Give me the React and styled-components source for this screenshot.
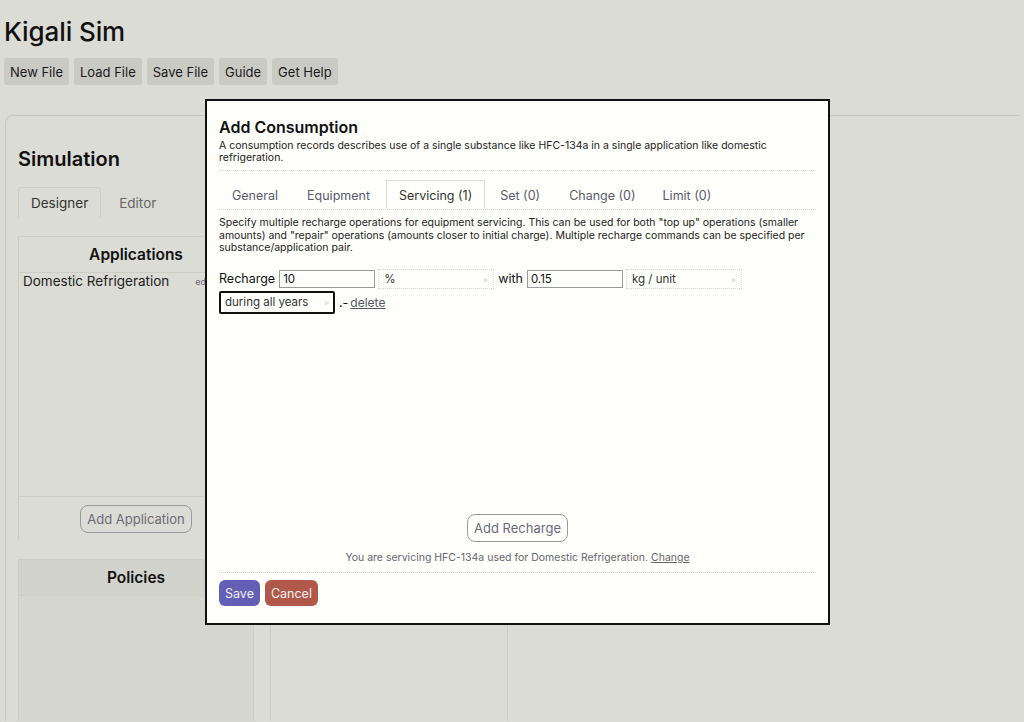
import React from 'react';
import styled, { createGlobalStyle } from 'styled-components';

const Global = createGlobalStyle`
  html, body {
    margin: 0;
    padding: 0;
    background: #dcdcd6;
    font-family: Inter, "Noto Sans", "Liberation Sans", sans-serif;
    color: #111;
    overflow: hidden;
  }
`;

const Page = styled.div`
  height: 722px;
  padding: 0 4px;
  box-sizing: border-box;
  overflow: hidden;
`;

const Title = styled.h1`
  margin: 0;
  padding-top: 15px;
  font-size: 26px;
  font-weight: 500;
  line-height: 34px;
  letter-spacing: -0.1px;
`;

const Toolbar = styled.div`
  display: flex;
  gap: 5px;
  margin-top: 9px;
`;

const ToolButton = styled.button`
  font: inherit;
  font-size: 13px;
  color: #1a1a1a;
  background: #cacac5;
  border: none;
  border-radius: 3px;
  height: 27px;
  padding: 0 6px;
`;

const Main = styled.section`
  margin-top: 30px;
  margin-left: 1px;
  border-top: 1px solid #c7c7bf;
  border-left: 1px solid #c7c7bf;
  border-top-left-radius: 8px;
  padding: 0 12px;
  height: 605px;
  overflow: hidden;
`;

const SectionTitle = styled.h2`
  margin: 0;
  padding-top: 31px;
  font-size: 20px;
  font-weight: 600;
  line-height: 24px;
`;

const Tabs = styled.div`
  display: flex;
  margin-top: 16px;
`;

const Tab = styled.div`
  height: 30px;
  padding: 0 12px;
  display: flex;
  align-items: center;
  font-size: 13.5px;
  color: ${p => (p.$active ? '#333' : '#666')};
  border: 1px solid ${p => (p.$active ? '#cfcfc8' : 'transparent')};
  border-bottom: none;
  border-radius: 3px 3px 0 0;
  margin-right: ${p => (p.$active ? '5px' : '0')};
`;

const Columns = styled.div`
  display: grid;
  grid-template-columns: 236px 238px;
  column-gap: 16px;
  margin-top: 18px;
`;

const Column = styled.div`
  display: flex;
  flex-direction: column;
  gap: 19px;
`;

const Box = styled.div`
  border: 1px solid #cdcdc6;
  border-bottom: none;
  height: ${p => p.$h}px;
  background: ${p => p.$bg || 'transparent'};
  display: flex;
  flex-direction: column;
`;

const BoxHeader = styled.div`
  height: 35px;
  display: flex;
  align-items: center;
  justify-content: center;
  font-weight: 600;
  font-size: 15.5px;
  border-bottom: 1px solid #cdcdc6;
  background: ${p => p.$bg || 'transparent'};
`;

const ListItem = styled.div`
  display: flex;
  gap: 26px;
  padding: 0 4px;
  font-size: 13.5px;
  color: #222;
`;

const SmallLink = styled.span`
  font-size: 9px;
  color: #667;
  padding-top: 3px;
`;

const BoxBody = styled.div`
  flex: 1;
`;

const BoxFooter = styled.div`
  border-top: 1px solid #cdcdc6;
  height: 43px;
  display: flex;
  align-items: center;
  justify-content: center;
`;

const OutlineButton = styled.button`
  font: inherit;
  font-size: 13px;
  color: #6a6a7a;
  background: transparent;
  border: 1px solid #9a9aa0;
  border-radius: 8px;
  height: 28px;
  padding: 0 6px;
`;

const Dialog = styled.div`
  position: fixed;
  left: 205px;
  top: 99px;
  width: 625px;
  height: 526px;
  box-sizing: border-box;
  border: 2px solid #111;
  background: #fffffc;
  padding: 16px 12px 0 12px;
  display: flex;
  flex-direction: column;
`;

const DialogTitle = styled.h3`
  margin: 0;
  font-size: 16px;
  font-weight: 600;
  line-height: 20px;
`;

const Description = styled.p`
  margin: 3px 0 0 0;
  font-size: 10.5px;
  line-height: 12px;
  color: #222;
`;

const Rule = styled.div`
  border-top: 1px dotted #cfcfd4;
  margin-top: ${p => p.$mt || 0}px;
`;

const DialogTabs = styled.div`
  display: flex;
  margin-top: 9px;
  border-bottom: 1px dotted #cfcfd4;
`;

const DialogTab = styled.div`
  height: 28px;
  display: flex;
  align-items: center;
  padding: 0 ${p => p.$px || 15}px;
  font-size: 12.5px;
  color: ${p => (p.$active ? '#333' : '#5a5a6e')};
  border: 1px solid ${p => (p.$active ? '#dcdce0' : 'transparent')};
  border-bottom: none;
`;

const Help = styled.p`
  margin: 7px 0 0 0;
  font-size: 10.5px;
  line-height: 12.5px;
  color: #222;
`;

const Editor = styled.div`
  margin-top: 14px;
  font-size: 12.5px;
  display: flex;
  flex-wrap: wrap;
  align-items: center;
  row-gap: 2px;
  width: 530px;
`;

const Label = styled.span`
  margin-right: 4px;
  color: #111;
`;

const TextInput = styled.div`
  width: ${p => p.$w}px;
  height: 18px;
  box-sizing: border-box;
  border: 1px solid #9a9a9a;
  padding: 0 3px;
  font-size: 11.5px;
  line-height: 16px;
  margin-right: 3px;
`;

const Select = styled.div`
  width: ${p => p.$w}px;
  height: ${p => (p.$focus ? 23 : 20)}px;
  box-sizing: border-box;
  border: ${p => (p.$focus ? '2px solid #111' : '1px dotted #d4d4d8')};
  border-radius: ${p => (p.$focus ? '2px' : '0')};
  padding: 0 ${p => (p.$focus ? 4 : 5)}px;
  display: flex;
  align-items: center;
  justify-content: space-between;
  font-size: 11.5px;
  color: #333;
  margin-right: 4px;
`;

const Arrow = styled.span`
  font-size: 8px;
  color: #b8b8c0;
`;

const Delete = styled.a`
  color: #555566;
  text-decoration: underline;
  font-size: 12px;
  margin-left: 2px;
`;

const Spacer = styled.div`
  flex: 1;
`;

const Centered = styled.div`
  display: flex;
  justify-content: center;
`;

const Note = styled.p`
  margin: 9px 0 8px 0;
  text-align: center;
  font-size: 10.5px;
  color: #66666e;
`;

const NoteLink = styled.span`
  text-decoration: underline;
`;

const Footer = styled.div`
  display: flex;
  gap: 5px;
  padding: 7px 0 17px 0;
`;

const ActionButton = styled.button`
  font: inherit;
  font-size: 12.5px;
  color: #f4f0f0;
  background: ${p => p.$bg};
  border: none;
  border-radius: 6px;
  height: 26px;
  padding: 0 6px;
`;

const servicingTabs = [
  { label: 'General', px: 12 },
  { label: 'Equipment', px: 15 },
  { label: 'Servicing (1)', px: 12, active: true },
  { label: 'Set (0)', px: 14 },
  { label: 'Change (0)', px: 13 },
  { label: 'Limit (0)', px: 12 },
];

export default function App() {
  return (
    <Page>
      <Global />
      <Title>Kigali Sim</Title>
      <Toolbar>
        {['New File', 'Load File', 'Save File', 'Guide', 'Get Help'].map(t => (
          <ToolButton key={t}>{t}</ToolButton>
        ))}
      </Toolbar>
      <Main>
        <SectionTitle>Simulation</SectionTitle>
        <Tabs>
          <Tab $active>Designer</Tab>
          <Tab>Editor</Tab>
        </Tabs>
        <Columns>
          <Column>
            <Box $h={303}>
              <BoxHeader>Applications</BoxHeader>
              <ListItem>
                <span>Domestic Refrigeration</span>
                <SmallLink>edit</SmallLink>
              </ListItem>
              <BoxBody />
              <BoxFooter>
                <OutlineButton>Add Application</OutlineButton>
              </BoxFooter>
            </Box>
            <Box $h={170} $bg="#d6d6d1">
              <BoxHeader $bg="#d3d3ce">Policies</BoxHeader>
            </Box>
          </Column>
          <Column>
            <Box $h={600} />
          </Column>
        </Columns>
      </Main>

      <Dialog>
        <DialogTitle>Add Consumption</DialogTitle>
        <Description>
          A consumption records describes use of a single substance like HFC-134a in a single application like domestic
          refrigeration.
        </Description>
        <Rule $mt={6} />
        <DialogTabs>
          {servicingTabs.map(t => (
            <DialogTab key={t.label} $px={t.px} $active={t.active}>
              {t.label}
            </DialogTab>
          ))}
        </DialogTabs>
        <Help>
          Specify multiple recharge operations for equipment servicing. This can be used for both "top up" operations (smaller
          amounts) and "repair" operations (amounts closer to initial charge). Multiple recharge commands can be specified per
          substance/application pair.
        </Help>
        <Editor>
          <Label>Recharge</Label>
          <TextInput $w={96}>10</TextInput>
          <Select $w={116}>
            <span>%</span>
            <Arrow>▹</Arrow>
          </Select>
          <Label>with</Label>
          <TextInput $w={96}>0.15</TextInput>
          <Select $w={116}>
            <span>kg / unit</span>
            <Arrow>▹</Arrow>
          </Select>
          <Select $w={116} $focus>
            <span>during all years</span>
            <Arrow>▹</Arrow>
          </Select>
          <span>.-</span>
          <Delete>delete</Delete>
        </Editor>
        <Spacer />
        <Centered>
          <OutlineButton>Add Recharge</OutlineButton>
        </Centered>
        <Note>
          You are servicing HFC-134a used for Domestic Refrigeration. <NoteLink>Change</NoteLink>
        </Note>
        <Rule />
        <Footer>
          <ActionButton $bg="#635fb4">Save</ActionButton>
          <ActionButton $bg="#b0594b">Cancel</ActionButton>
        </Footer>
      </Dialog>
    </Page>
  );
}
